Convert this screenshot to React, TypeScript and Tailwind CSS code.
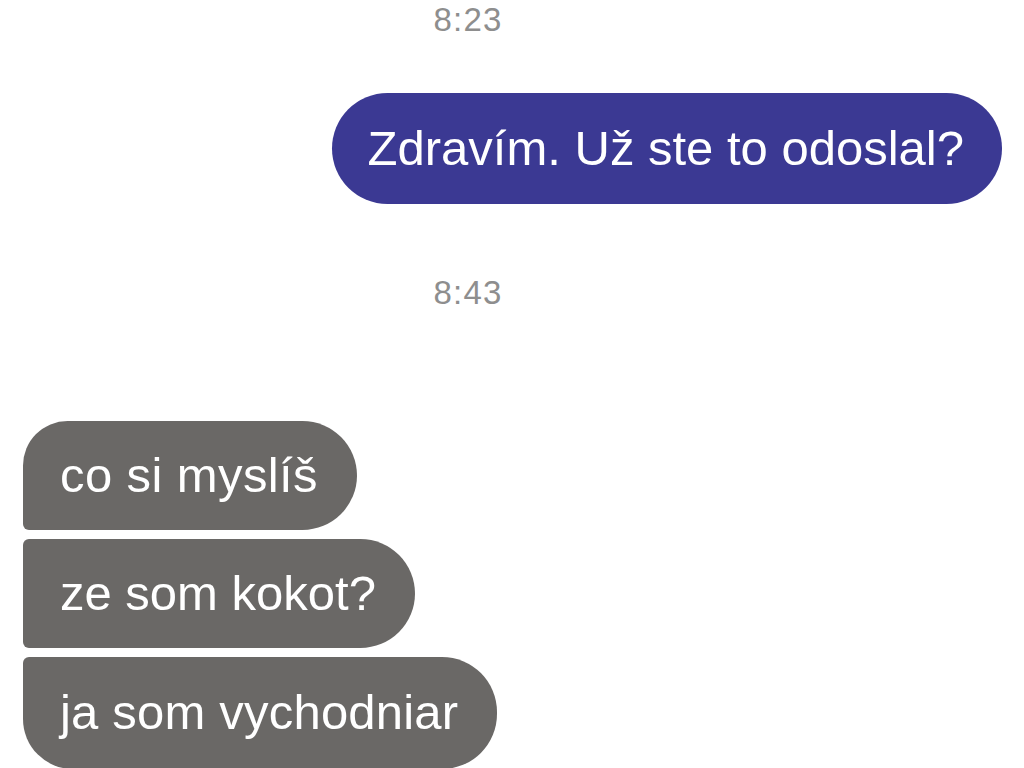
import React from "react";

export default function App() {
  return (
    <div className="h-[768px] w-[1024px] overflow-hidden bg-white" style={{ fontFamily: '"Liberation Sans", Arial, sans-serif' }}>
      <div className="flex h-[40px] w-[936px] items-center justify-center text-[33px] tracking-[1.2px] text-[#8e8e8e]">8:23</div>
      <div className="mt-[53px] flex justify-end pr-[22px]">
        <div className="flex h-[111px] items-center rounded-full bg-[#3b3993] pl-[36px] pr-[38px] text-[49px] text-white">
          Zdravím. Už ste to odoslal?
        </div>
      </div>
      <div className="mt-[70px] flex h-[38px] w-[936px] items-center justify-center text-[33px] tracking-[1.2px] text-[#8e8e8e]">8:43</div>
      <div className="mt-[109px] flex flex-col items-start gap-[9px] pl-[23px]">
        <div className="flex h-[109px] items-center rounded-r-[55px] rounded-tl-[45px] rounded-bl-[6px] bg-[#6a6866] pl-[37px] pr-[39px] text-[49px] tracking-[0.4px] text-white">
          co si myslíš
        </div>
        <div className="flex h-[109px] items-center rounded-r-[55px] rounded-l-[6px] bg-[#6a6866] pl-[37px] pr-[39px] text-[49px] text-white">
          ze som kokot?
        </div>
        <div className="flex h-[112px] items-center rounded-r-[55px] rounded-tl-[6px] rounded-bl-[50px] bg-[#6a6866] pl-[37px] pr-[39px] text-[49px] tracking-[0.2px] text-white">
          ja som vychodniar
        </div>
      </div>
    </div>
  );
}
